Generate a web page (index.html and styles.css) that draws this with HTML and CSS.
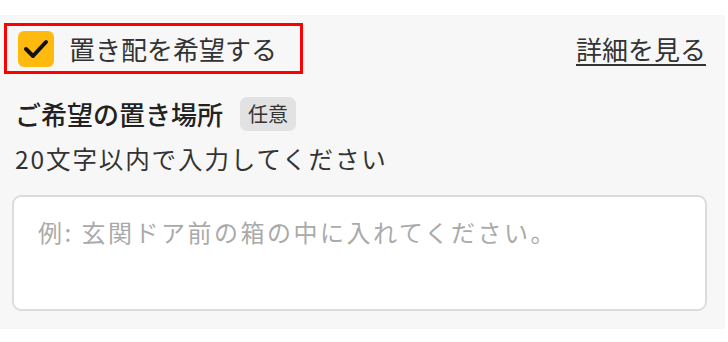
FILE: index.html
```html
<!DOCTYPE html>
<html lang="ja">
<head>
  <meta charset="UTF-8">
  <meta name="viewport" content="width=device-width, initial-scale=1.0">
  <title>置き配</title>
  <link rel="stylesheet" href="styles.css">
</head>
<body>

  <!-- Drop-off panel -->
  <div class="panel">
    <div class="option-row">
      <label class="option">
        <span class="checkbox">
          <svg width="36" height="36" viewBox="0 0 36 36">
            <path d="M8 18 L15 25 L28 11" fill="none" stroke="#111" stroke-width="4" stroke-linecap="round" stroke-linejoin="round"/>
          </svg>
        </span>
        <span class="option-label">置き配を希望する</span>
      </label>
      <a class="details-link" href="#">詳細を見る</a>
    </div>

    <div class="field-title">
      <span>ご希望の置き場所</span>
      <span class="badge">任意</span>
    </div>
    <div class="field-hint">20文字以内で入力してください</div>

    <textarea class="place-input" placeholder="例: 玄関ドア前の箱の中に入れてください。"></textarea>
  </div>

</body>
</html>
```

FILE: styles.css
```css
/* Basic styling */
body, html {
  margin: 0;
  padding: 0;
  background-color: #fff;
  color: #333;
  font-family: "Noto Sans CJK JP", "Noto Sans", sans-serif;
}

.panel {
  margin-top: 15px;
  width: 725px;
  height: 314px;
  box-sizing: border-box;
  padding: 8px 18px 18px 12px;
  background-color: #f7f7f7;
}

/* Checkbox row */
.option-row {
  display: flex;
  justify-content: space-between;
  align-items: center;
  margin-left: -8px;
}
.option {
  display: flex;
  align-items: center;
  gap: 15px;
  width: 299px;
  height: 51px;
  box-sizing: border-box;
  padding-left: 11px;
  border: 3px solid #ff0000;
}
.checkbox {
  display: flex;
  width: 36px;
  height: 36px;
  border-radius: 6px;
  background-color: #ffb90f;
}
.option-label {
  font-size: 26px;
  line-height: 34px;
  color: #333;
}
.details-link {
  font-size: 26px;
  line-height: 34px;
  color: #333;
  text-decoration: underline;
  text-underline-offset: 4px;
  text-decoration-thickness: 2px;
  margin-right: 1px;
}

/* Field heading */
.field-title {
  display: flex;
  align-items: center;
  gap: 17px;
  margin: 23px 0 0 3px;
  font-size: 26px;
  font-weight: 500;
  line-height: 34px;
  color: #222;
}
.badge {
  display: inline-block;
  height: 34px;
  padding: 0 8px;
  border-radius: 7px;
  background-color: #e2e2e2;
  font-size: 20px;
  font-weight: normal;
  line-height: 34px;
  color: #333;
}
.field-hint {
  margin: 13px 0 0 3px;
  font-size: 24.5px;
  letter-spacing: 1.9px;
  line-height: 30px;
  color: #333;
}

/* Text box */
.place-input {
  display: block;
  width: 695px;
  height: 116px;
  box-sizing: border-box;
  margin-top: 21px;
  padding: 20px 24px;
  border: 2px solid #dcdcdc;
  border-radius: 9px;
  background-color: #fff;
  font-family: "Noto Sans CJK JP", sans-serif;
  font-size: 24px;
  letter-spacing: 2.5px;
  line-height: 30px;
  resize: none;
  outline: none;
}
.place-input::placeholder {
  color: #aaa;
}
```
